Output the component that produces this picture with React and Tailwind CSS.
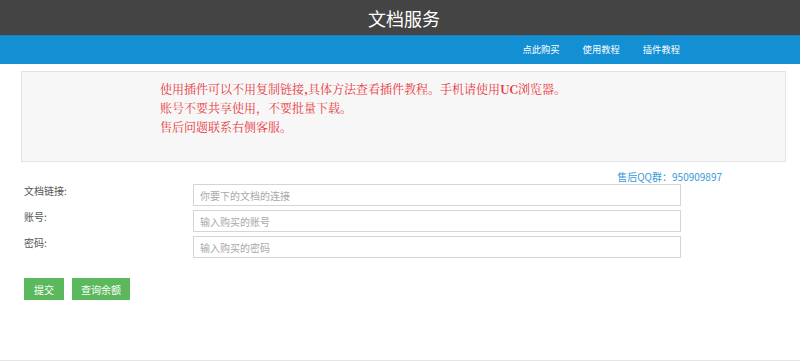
import React from 'react';

const sans = { fontFamily: '"Microsoft YaHei", "Noto Sans CJK SC", "Noto Sans", sans-serif' };

const Field = ({ label, placeholder, type = 'text' }) => (
  <div className="flex items-start">
    <label className="w-[193px] pl-[24px] text-[10px] leading-[14px] text-[#555]">{label}</label>
    <input
      type={type}
      placeholder={placeholder}
      className="w-[488px] h-[22px] border border-[#d5d5d5] bg-white px-[6px] text-[10px] text-[#555] placeholder:text-[#a9a9a9] outline-none"
    />
  </div>
);

const App = () => {
  return (
    <div className="w-[800px] h-[362px] bg-white overflow-hidden" style={sans}>
      <header className="h-[35px] bg-[#444444] flex items-center justify-center">
        <h1 className="pl-[8px] text-[18px] leading-none text-white">文档服务</h1>
      </header>

      <nav className="h-[29px] bg-[#138fd4] border-t border-[#1f7fb8] flex items-center justify-end gap-[23px] pr-[120px]">
        <a className="text-[9.3px] text-white">点此购买</a>
        <a className="text-[9.3px] text-white">使用教程</a>
        <a className="text-[9.3px] text-white">插件教程</a>
      </nav>

      <div className="ml-[21px] mr-[14px] mt-[7px] h-[91px] bg-[#f7f7f7] border border-[#e3e3e3] pl-[138px] pt-[7px]">
        <div
          className="text-[12px] leading-[19px] text-[#e8383d]"
          style={{ fontFamily: '"Noto Serif CJK SC", "Liberation Serif", "Noto Sans CJK SC", serif' }}
        >
          <p>使用插件可以不用复制链接<b>,</b>具体方法查看插件教程。手机请使用<b className="font-bold">UC</b>浏览器。</p>
          <p>账号不要共享使用，不要批量下载。</p>
          <p>售后问题联系右侧客服。</p>
        </div>
      </div>

      <div className="mt-[8px] pr-[78px] flex justify-end">
        <span className="text-[10px] leading-[14px] text-[#3b9ad6]">售后QQ群：950909897</span>
      </div>

      <form className="flex flex-col gap-[4px]">
        <Field label="文档链接:" placeholder="你要下的文档的连接" />
        <Field label="账号:" placeholder="输入购买的账号" />
        <Field label="密码:" placeholder="输入购买的密码" type="password" />
      </form>

      <div className="mt-[20px] pl-[24px] flex gap-[8px]">
        <button className="h-[22px] w-[40px] bg-[#5cb85c] text-white text-[10px]">提交</button>
        <button className="h-[22px] w-[58px] bg-[#5cb85c] text-white text-[10px]">查询余额</button>
      </div>

      <div className="mt-[60px] border-t border-[#e5e5e5]" />
    </div>
  );
};

export default App;
